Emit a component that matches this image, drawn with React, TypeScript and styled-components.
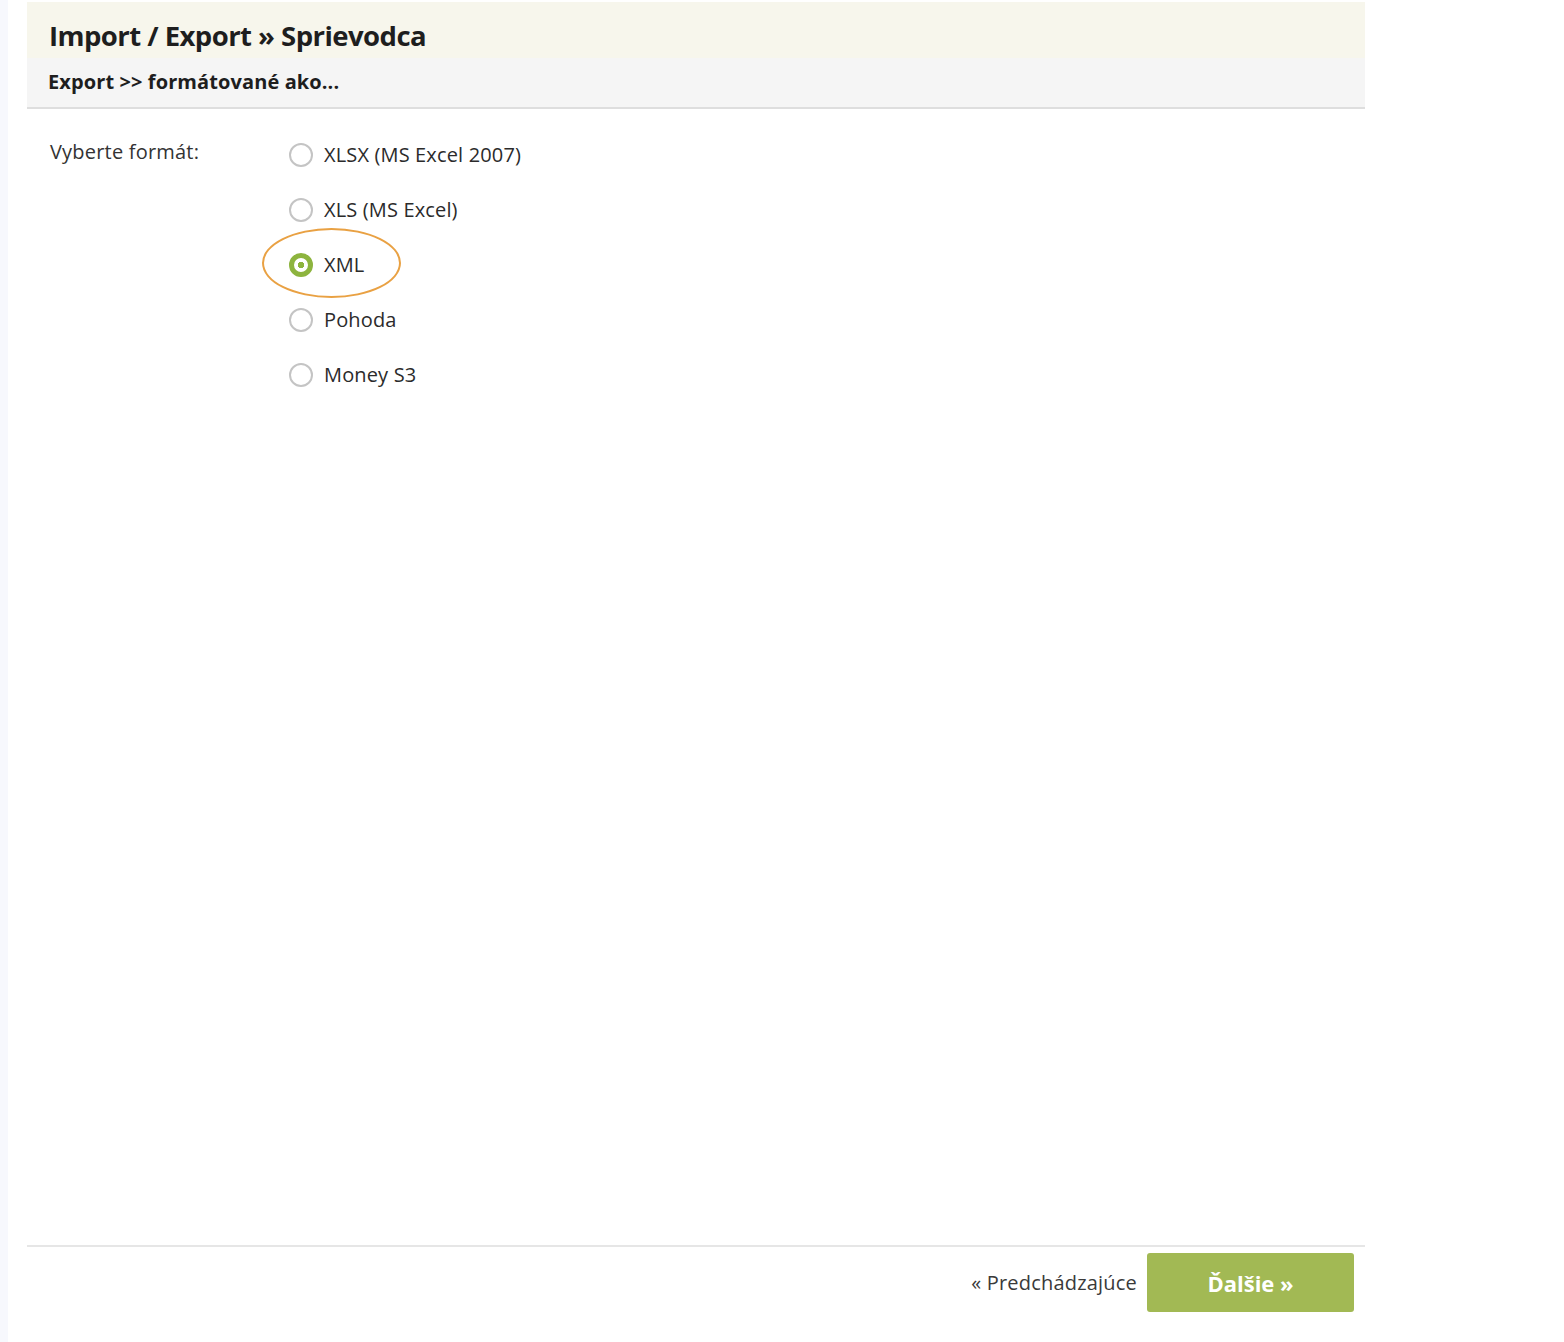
import styled, { createGlobalStyle } from 'styled-components';
import { useState } from 'react';

const formats = ['XLSX (MS Excel 2007)', 'XLS (MS Excel)', 'XML', 'Pohoda', 'Money S3'];

const GlobalStyle = createGlobalStyle`
  html, body {
    margin: 0;
    padding: 0;
    background: #ffffff;
    font-family: 'Open Sans', 'Noto Sans', sans-serif;
    color: #2b2b2b;
  }
`;

const App = () => {
  const [selected, setSelected] = useState('XML');

  return (
    <Page>
      <GlobalStyle />
      <SideStrip />
      <Main>
        <Header>
          <TitleBar>
            <Title>Import / Export » Sprievodca</Title>
          </TitleBar>
          <SubBar>
            <SubTitle>Export &gt;&gt; formátované ako...</SubTitle>
          </SubBar>
        </Header>

        <Content>
          <FieldLabel>Vyberte formát:</FieldLabel>
          <Options>
            {formats.map((f) => (
              <Option key={f}>
                <Radio
                  type='radio'
                  name='format'
                  checked={selected === f}
                  onChange={() => setSelected(f)}
                />
                <OptionText>{f}</OptionText>
                {f === 'XML' && <Highlight />}
              </Option>
            ))}
          </Options>
        </Content>

        <Footer>
          <PrevLink>« Predchádzajúce</PrevLink>
          <NextButton>Ďalšie »</NextButton>
        </Footer>
      </Main>
    </Page>
  );
};

export default App;

const Page = styled.div`
  display: flex;
  height: 1342px;
  width: 1564px;
`;

const SideStrip = styled.div`
  width: 8px;
  background: #f7f8fd;
  flex-shrink: 0;
`;

const Main = styled.div`
  display: flex;
  flex-direction: column;
  width: 1338px;
  margin-left: 19px;
`;

const Header = styled.div`
  margin-top: 2px;
  border-bottom: 2px solid #dedede;
`;

const TitleBar = styled.div`
  height: 46px;
  display: flex;
  align-items: center;
  padding: 10px 0 0 22px;
  background: #f7f6ec;
`;

const Title = styled.h1`
  margin: 0;
  font-size: 27.5px;
  font-weight: 700;
  color: #1e1e1e;
  letter-spacing: -0.55px;
`;

const SubBar = styled.div`
  height: 46px;
  display: flex;
  align-items: center;
  padding: 0 0 3px 21px;
  background: #f5f5f5;
`;

const SubTitle = styled.h3`
  margin: 0;
  font-size: 20px;
  font-weight: 700;
  color: #1e1e1e;
  letter-spacing: 0.1px;
`;

const Content = styled.div`
  flex: 1;
  display: flex;
  padding: 18px 0 0 23px;
`;

const FieldLabel = styled.div`
  width: 239px;
  font-size: 20px;
  line-height: 50px;
  color: #333;
  letter-spacing: 0.2px;
`;

const Options = styled.div`
  display: flex;
  flex-direction: column;
`;

const Option = styled.label`
  position: relative;
  height: 55px;
  display: flex;
  align-items: center;
  gap: 11px;
  cursor: pointer;
`;

const Radio = styled.input`
  appearance: none;
  margin: 0;
  width: 24px;
  height: 24px;
  border-radius: 50%;
  border: 2px solid #c4c4c4;
  background: #fff;
  box-sizing: border-box;
  cursor: pointer;

  &:checked {
    border: 5px solid #8db43e;
    background: radial-gradient(circle, #8db43e 0 3px, #fff 3.5px);
  }
`;

const OptionText = styled.span`
  font-size: 20px;
  color: #2b2b2b;
  letter-spacing: 0.15px;
`;

const Highlight = styled.span`
  position: absolute;
  left: -27px;
  top: -9px;
  width: 139px;
  height: 70px;
  box-sizing: border-box;
  border: 2px solid #e9a143;
  border-radius: 50%;
  pointer-events: none;
`;

const Footer = styled.div`
  display: flex;
  justify-content: flex-end;
  align-items: center;
  gap: 10px;
  border-top: 2px solid #e6e6e6;
  padding: 6px 11px 30px 0;
`;

const PrevLink = styled.span`
  font-size: 20px;
  color: #3a3a3a;
  letter-spacing: 0.2px;
  cursor: pointer;
`;

const NextButton = styled.button`
  width: 207px;
  height: 59px;
  border: none;
  border-radius: 3px;
  background: #a2b954;
  color: #fff;
  font-family: 'Open Sans', 'Noto Sans', sans-serif;
  font-size: 22px;
  font-weight: 700;
  cursor: pointer;
`;
